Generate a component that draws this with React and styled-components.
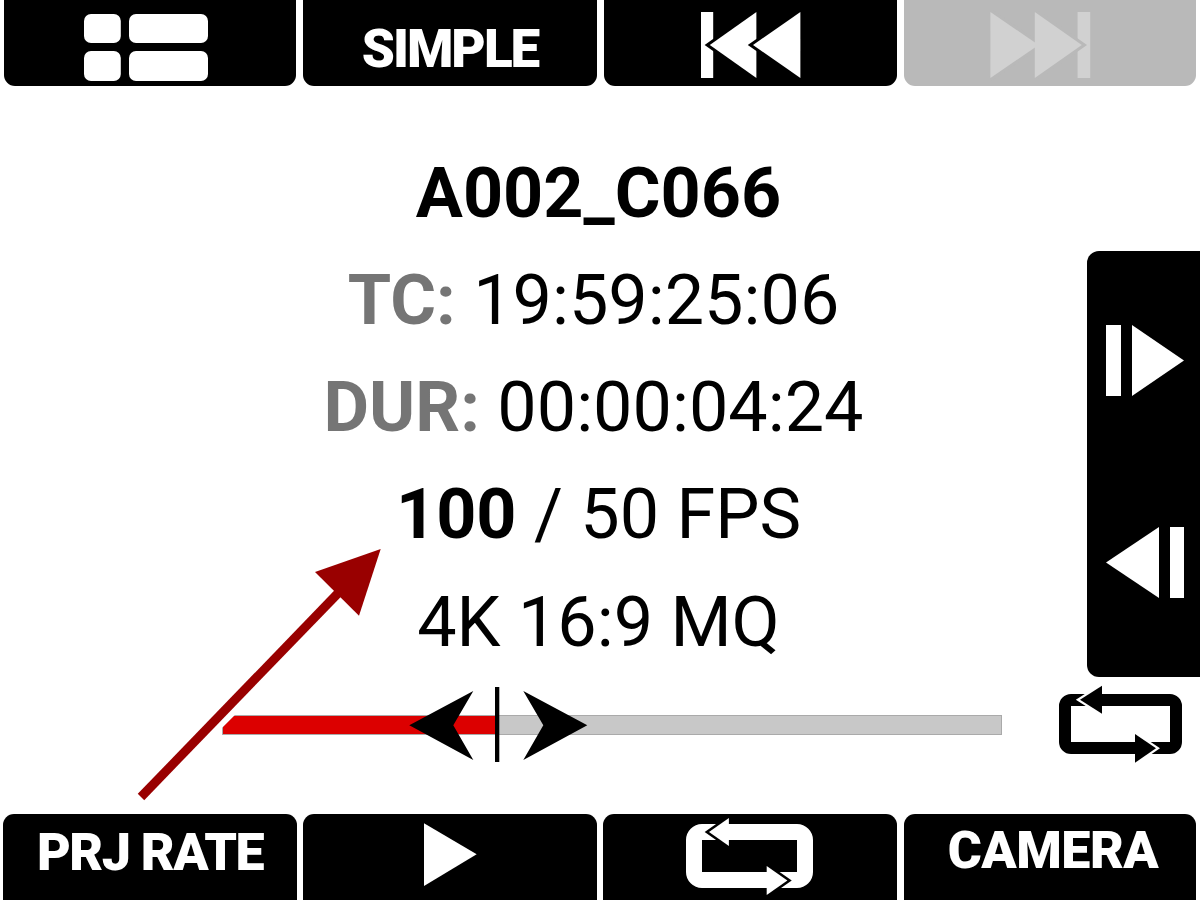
import React from "react";
import styled, { createGlobalStyle } from "styled-components";

const Global = createGlobalStyle`
  html, body { margin: 0; padding: 0; background: #fff; }
  body { font-family: Roboto, "Liberation Sans", sans-serif; }
`;

const Screen = styled.div`
  position: relative;
  width: 1200px;
  height: 900px;
  overflow: hidden;
  display: flex;
  flex-direction: column;
  background: #fff;
`;

const ButtonBar = styled.div`
  display: flex;
  height: 86px;
  padding-left: ${(p) => p.$left}px;
  gap: ${(p) => p.$gap}px;
`;

const Button = styled.div`
  box-sizing: border-box;
  width: ${(p) => p.$width}px;
  height: 86px;
  flex: none;
  display: flex;
  align-items: center;
  justify-content: center;
  margin-left: ${(p) => p.$nudge || 0}px;
  padding: ${(p) => p.$pad || "0"};
  background: ${(p) => (p.$disabled ? "#b9b9b9" : "#000")};
  color: #fff;
  border-radius: ${(p) => (p.$top ? "0 0 11px 11px" : "11px 11px 0 0")};
  font-weight: 900;
  font-size: ${(p) => p.$size || 52}px;
  line-height: 1;
  letter-spacing: ${(p) => p.$spacing || 0}px;
  white-space: nowrap;
`;

const ButtonIcon = styled.svg`
  display: block;
  width: 100%;
  height: 100%;
  flex: none;
`;

const Upper = styled.div`
  display: flex;
  height: 591px;
  padding-left: 110px;
`;

const Info = styled.div`
  flex: 1;
  padding-top: 53.5px;
  display: flex;
  flex-direction: column;
  align-items: center;
  font-size: 70.1px;
  color: #000;
`;

const InfoLine = styled.div`
  box-sizing: border-box;
  height: 107.3px;
  line-height: 107.3px;
  padding-right: ${(p) => (p.$shifted ? 10 : 0)}px;
  white-space: nowrap;
`;

const Bold = styled.span`
  font-weight: 700;
`;

const Label = styled.span`
  font-weight: 700;
  color: #757575;
`;

const SidePanel = styled.div`
  box-sizing: border-box;
  width: 113px;
  height: 426px;
  margin-top: 165px;
  padding: 74px 0 0 19px;
  display: flex;
  flex-direction: column;
  gap: 131px;
  background: #000;
  border-radius: 12px 0 0 12px;
`;

const SideIcon = styled.svg`
  display: block;
  width: 78px;
  height: 71px;
`;

const ScrubRow = styled.div`
  position: relative;
  flex: 1;
  display: flex;
  align-items: flex-start;
  padding: 8px 0 0 222px;
`;

const Track = styled.div`
  box-sizing: border-box;
  width: 780px;
  height: 20px;
  margin-top: 30px;
  background: #c8c8c8;
  border: 1px solid #aaa;
  clip-path: polygon(13px 0, 100% 0, 100% 100%, 0 100%, 0 13px);
`;

const TrackFill = styled.div`
  height: 100%;
  background: #dc0000;
`;

const LoopIcon = styled.svg`
  display: block;
  flex: none;
  width: 123px;
  height: 78px;
  margin-left: 57px;
`;

const Handles = styled.svg`
  position: absolute;
  left: 409px;
  top: 10px;
  width: 179px;
  height: 76px;
`;

const Annotation = styled.svg`
  position: absolute;
  left: 0;
  top: 0;
  width: 1200px;
  height: 900px;
  pointer-events: none;
`;

/* A triangle with an outline only along its two slanted edges, painted under the fill. */
function Arrowhead({ base, tip, top, bottom, fill, outline, outlineWidth }) {
  const mid = (top + bottom) / 2;
  return (
    <>
      <path
        d={`M${base} ${top} L${tip} ${mid} L${base} ${bottom}`}
        fill="none"
        stroke={outline}
        strokeWidth={outlineWidth}
        strokeMiterlimit="10"
      />
      <path d={`M${base} ${top} L${tip} ${mid} L${base} ${bottom} Z`} fill={fill} />
    </>
  );
}

export default function App() {
  return (
    <Screen>
      <Global />
      <ButtonBar $left={4} $gap={7}>
        <Button $top $width={292}>
          <ButtonIcon viewBox="0 0 292 86">
            <g fill="#fff">
              <rect x="80" y="14" width="36.8" height="29" rx="7" />
              <rect x="125" y="14" width="79" height="29" rx="7" />
              <rect x="80" y="51" width="36.8" height="30" rx="7" />
              <rect x="125" y="51" width="79" height="30" rx="7" />
            </g>
          </ButtonIcon>
        </Button>
        <Button $top $width={294} $size={53} $pad="13px 0 0 0" $spacing={-2}>SIMPLE</Button>
        <Button $top $width={293}>
          <ButtonIcon viewBox="0 0 293 86">
            <rect x="97" y="12" width="12.2" height="66" fill="#fff" />
            <Arrowhead base={152.4} tip={105.8} top={12} bottom={78} fill="#fff" outline="#000" outlineWidth={6} />
            <Arrowhead base={196.4} tip={149} top={12} bottom={78} fill="#fff" outline="#000" outlineWidth={6} />
          </ButtonIcon>
        </Button>
        <Button $top $disabled $width={292}>
          <ButtonIcon viewBox="0 0 292 86">
            <rect x="173.6" y="12" width="12.6" height="66" fill="#d1d1d1" />
            <Arrowhead base={86.4} tip={134.6} top={12} bottom={78} fill="#d1d1d1" outline="#b9b9b9" outlineWidth={6} />
            <Arrowhead base={130.8} tip={177.8} top={12} bottom={78} fill="#d1d1d1" outline="#b9b9b9" outlineWidth={6} />
          </ButtonIcon>
        </Button>
      </ButtonBar>

      <Upper>
        <Info>
          <InfoLine><Bold>A002_C066</Bold></InfoLine>
          <InfoLine $shifted><Label>TC:</Label> 19:59:25:06</InfoLine>
          <InfoLine $shifted><Label>DUR:</Label> 00:00:04:24</InfoLine>
          <InfoLine><Bold>100</Bold> / 50 FPS</InfoLine>
          <InfoLine>4K 16:9 MQ</InfoLine>
        </Info>
        <SidePanel>
          <SideIcon viewBox="0 0 78 71">
            <rect x="0" y="0" width="15" height="71" fill="#fff" />
            <path d="M26 0 L78 35.5 L26 71 Z" fill="#fff" />
          </SideIcon>
          <SideIcon viewBox="0 0 78 71">
            <path d="M53 0 L0 35.5 L53 71 Z" fill="#fff" />
            <rect x="64" y="0" width="14" height="71" fill="#fff" />
          </SideIcon>
        </SidePanel>
      </Upper>

      <ScrubRow>
        <Track>
          <TrackFill style={{ width: `${(274 / 778) * 100}%` }} />
        </Track>
        <LoopIcon viewBox="0 0 123 78">
          <rect x="6" y="15" width="111" height="48" rx="6" fill="none" stroke="#000" strokeWidth="12" />
          <Arrowhead base={43} tip={21} top={0.7} bottom={28.7} fill="#000" outline="#fff" outlineWidth={4.5} />
          <Arrowhead base={76} tip={97} top={49} bottom={77.7} fill="#000" outline="#fff" outlineWidth={4.5} />
        </LoopIcon>
        <Handles viewBox="0 0 179 76">
          <path d="M0.3 38.3 L64.3 4 L44.3 38.3 L64.3 73 Z" fill="#000" />
          <rect x="86" y="0" width="4.3" height="75" fill="#000" />
          <path d="M178.3 38.3 L114.3 4 L134.3 38.3 L114.3 73 Z" fill="#000" />
        </Handles>
      </ScrubRow>

      <ButtonBar $left={3} $gap={6}>
        <Button $width={294} $pad="0 0 8px 0" $spacing={-1.5}>PRJ RATE</Button>
        <Button $width={294}>
          <ButtonIcon viewBox="0 0 294 86">
            <path d="M121 9.3 L173.7 40.3 L121 72 Z" fill="#fff" />
          </ButtonIcon>
        </Button>
        <Button $width={294}>
          <ButtonIcon viewBox="0 0 294 86">
            <rect x="91" y="18" width="111" height="48" rx="8" fill="none" stroke="#fff" strokeWidth="16" />
            <Arrowhead base={125.9} tip={106} top={4} bottom={32} fill="#fff" outline="#000" outlineWidth={5} />
            <Arrowhead base={163.7} tip={184.4} top={52} bottom={81} fill="#fff" outline="#000" outlineWidth={5} />
          </ButtonIcon>
        </Button>
        <Button $width={292} $nudge={1} $pad="0 0 12px 6px" $spacing={-0.5}>CAMERA</Button>
      </ButtonBar>

      <Annotation viewBox="0 0 1200 900">
        <line x1="141" y1="797" x2="345" y2="586" stroke="#990000" strokeWidth="9" />
        <path d="M380.7 549 L315 572 L359 615.7 Z" fill="#990000" />
      </Annotation>
    </Screen>
  );
}
